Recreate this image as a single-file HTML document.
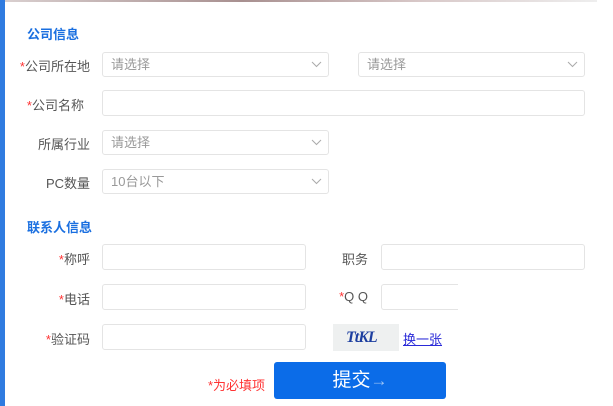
<!DOCTYPE html>
<html><head><meta charset="utf-8"><style>
body{margin:0;width:613px;height:406px;background:#fff;position:relative;overflow:hidden;font-family:"Liberation Sans","Noto Sans CJK SC",sans-serif;}
.a{position:absolute}
.bar{left:0;top:0;width:5px;height:406px;background:#2f7be0}
.top{left:5px;top:0;width:592px;height:2px;background:linear-gradient(90deg,#d9cfcf,#a89090 40%,#d8c8c8 70%,#eee)}
.h{font-size:13px;font-weight:bold;color:#1a6fe0}
.l{font-size:13px;color:#555;text-align:right;width:90px;left:0}
.l b{color:#f33;font-weight:normal}
.box{border:1px solid #e4e4e4;border-radius:3px;background:#fff;box-sizing:border-box}
.sel{font-size:13px;color:#999;padding-left:8px;line-height:24px}
.sel svg{position:absolute;right:6px;top:8px}
</style></head><body>
<div class="a bar"></div><div class="a top"></div>
<div class="a h" style="left:27px;top:24px">公司信息</div>
<div class="a l" style="top:56px"><b>*</b>公司所在地</div>
<div class="a box sel" style="left:102px;top:52px;width:227px;height:25px">请选择<svg width="11" height="7"><path d="M1 1L5.5 5.5L10 1" fill="none" stroke="#aaa"/></svg></div>
<div class="a box sel" style="left:358px;top:52px;width:227px;height:25px">请选择<svg width="11" height="7"><path d="M1 1L5.5 5.5L10 1" fill="none" stroke="#aaa"/></svg></div>
<div class="a l" style="top:95px;width:84px"><b>*</b>公司名称</div>
<div class="a box" style="left:102px;top:90px;width:483px;height:26px"></div>
<div class="a l" style="top:134px">所属行业</div>
<div class="a box sel" style="left:102px;top:130px;width:227px;height:25px">请选择<svg width="11" height="7"><path d="M1 1L5.5 5.5L10 1" fill="none" stroke="#aaa"/></svg></div>
<div class="a l" style="top:173px">PC数量</div>
<div class="a box sel" style="left:102px;top:169px;width:227px;height:25px">10台以下<svg width="11" height="7"><path d="M1 1L5.5 5.5L10 1" fill="none" stroke="#aaa"/></svg></div>
<div class="a h" style="left:27px;top:217px">联系人信息</div>
<div class="a l" style="top:249px"><b>*</b>称呼</div>
<div class="a box" style="left:102px;top:244px;width:204px;height:26px"></div>
<div class="a l" style="top:249px;left:280px;width:88px">职务</div>
<div class="a box" style="left:381px;top:244px;width:204px;height:26px"></div>
<div class="a l" style="top:289px"><b>*</b>电话</div>
<div class="a box" style="left:102px;top:284px;width:204px;height:26px"></div>
<div class="a l" style="top:289px;left:280px;width:88px"><b>*</b>Q Q</div>
<div class="a box" style="left:381px;top:284px;width:80px;height:26px;border-right:none"></div>
<div class="a" style="left:458px;top:280px;width:155px;height:40px;background:#fff"></div>
<div class="a l" style="top:329px"><b>*</b>验证码</div>
<div class="a box" style="left:102px;top:324px;width:204px;height:26px"></div>
<div class="a" style="left:333px;top:324px;width:66px;height:27px;background:#eef0f0;font:bold italic 16px 'Liberation Serif',serif;color:#1d3fa0;letter-spacing:-1px;line-height:27px;padding-left:13px;box-sizing:border-box">TtKL</div>
<div class="a" style="left:403px;top:329px;font-size:13px;color:#2a2ad8;text-decoration:underline">换一张</div>
<div class="a" style="left:208px;top:375px;font-size:13px;color:#f33">*为必填项</div>
<div class="a" style="left:274px;top:362px;width:172px;height:37px;background:#0b6ce8;border-radius:3px;color:#fff;font-size:19px;text-align:center;line-height:37px">提交<span style="color:#9cc4f5;font-size:17px">→</span></div>
</body></html>
